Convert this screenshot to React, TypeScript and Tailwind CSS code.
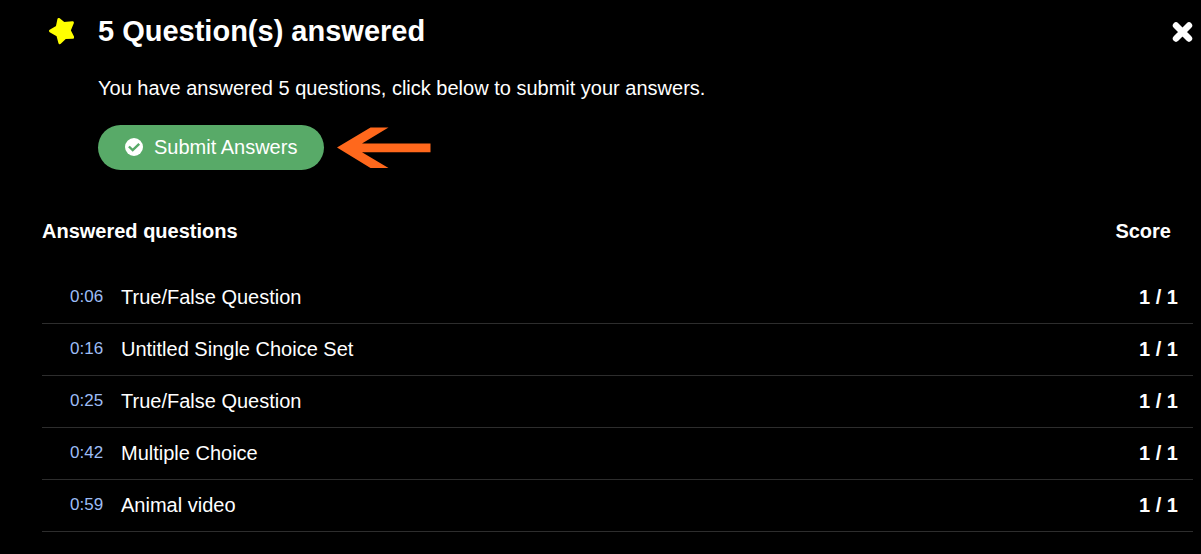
import React from 'react';

type Answer = { time: string; title: string; score: string };

const answers: Answer[] = [
  { time: '0:06', title: 'True/False Question', score: '1 / 1' },
  { time: '0:16', title: 'Untitled Single Choice Set', score: '1 / 1' },
  { time: '0:25', title: 'True/False Question', score: '1 / 1' },
  { time: '0:42', title: 'Multiple Choice', score: '1 / 1' },
  { time: '0:59', title: 'Animal video', score: '1 / 1' },
];

function StarIcon() {
  return (
    <svg viewBox="0 0 26 28" className="h-7 w-[26px]" aria-hidden="true">
      <path
        d="M10.800 2.300 16 6.500 24.500 5.600 21.300 13.500 24.800 20.300 17.300 20.600 11.800 25.800 9.800 18.300 2.400 14 9.200 10Z"
        fill="#ffff00"
        stroke="#ffff00"
        strokeWidth="2.8"
        strokeLinejoin="round"
      />
    </svg>
  );
}

function CloseIcon() {
  return (
    <svg viewBox="0 0 21 21" className="size-[21px]" aria-hidden="true">
      <path d="M4 4.500 17 17.500M17 4.500 4 17.500" stroke="#fff" strokeWidth="6.4" strokeLinecap="round" />
    </svg>
  );
}

function CheckCircleIcon() {
  return (
    <svg viewBox="0 0 18 18" className="size-[18px]" aria-hidden="true">
      <circle cx="9" cy="9" r="9" fill="#fff" />
      <path d="M3.900 8.500 7.700 12.200 14.200 5.900" fill="none" stroke="#58aa68" strokeWidth="2.4" />
    </svg>
  );
}

function ArrowPointer() {
  return (
    <svg viewBox="0 0 94 42" className="h-[42px] w-[94px]" aria-hidden="true">
      <path d="M0 20.500 33.500 .5H51.500L25 16.500H93.500V25.200H25L51.500 41H33.500Z" fill="#ff681c" />
    </svg>
  );
}

export default function App() {
  return (
    <main className="min-h-screen bg-black pr-2 pb-5 font-['Liberation_Sans',Arial,sans-serif] text-xl text-white">
      <header className="flex h-[62px] items-center pl-12">
        <StarIcon />
        <h1 className="ml-6 flex-1 text-[29px] leading-8 font-bold">5 Question(s) answered</h1>
        <button type="button" aria-label="Close">
          <CloseIcon />
        </button>
      </header>

      <section className="pt-3 pl-[98px]">
        <p className="leading-7">You have answered 5 questions, click below to submit your answers.</p>
        <div className="mt-[23px] flex items-center gap-[13px]">
          <button
            type="button"
            className="flex h-[45px] items-center gap-[11px] rounded-full bg-[#58aa68] px-[27px] pb-px"
          >
            <CheckCircleIcon />
            Submit Answers
          </button>
          <ArrowPointer />
        </div>
      </section>

      <section className="mt-9 pl-[42px]">
        <table className="w-full border-collapse">
          <thead>
            <tr className="h-[65px] align-top">
              <th colSpan={2} scope="col" className="pt-[11px] text-left leading-7 font-bold">
                Answered questions
              </th>
              <th scope="col" className="pt-[11px] pr-[22px] text-right leading-7 font-bold">
                Score
              </th>
            </tr>
          </thead>
          <tbody>
            {answers.map((answer) => (
              <tr key={answer.time} className="h-[52px] border-b border-[#2d2d2d]">
                <td className="w-[79px] pl-7 text-[17px] text-[#9dbdf5]">{answer.time}</td>
                <td>{answer.title}</td>
                <td className="pr-[15px] text-right font-bold">{answer.score}</td>
              </tr>
            ))}
          </tbody>
        </table>
      </section>
    </main>
  );
}
